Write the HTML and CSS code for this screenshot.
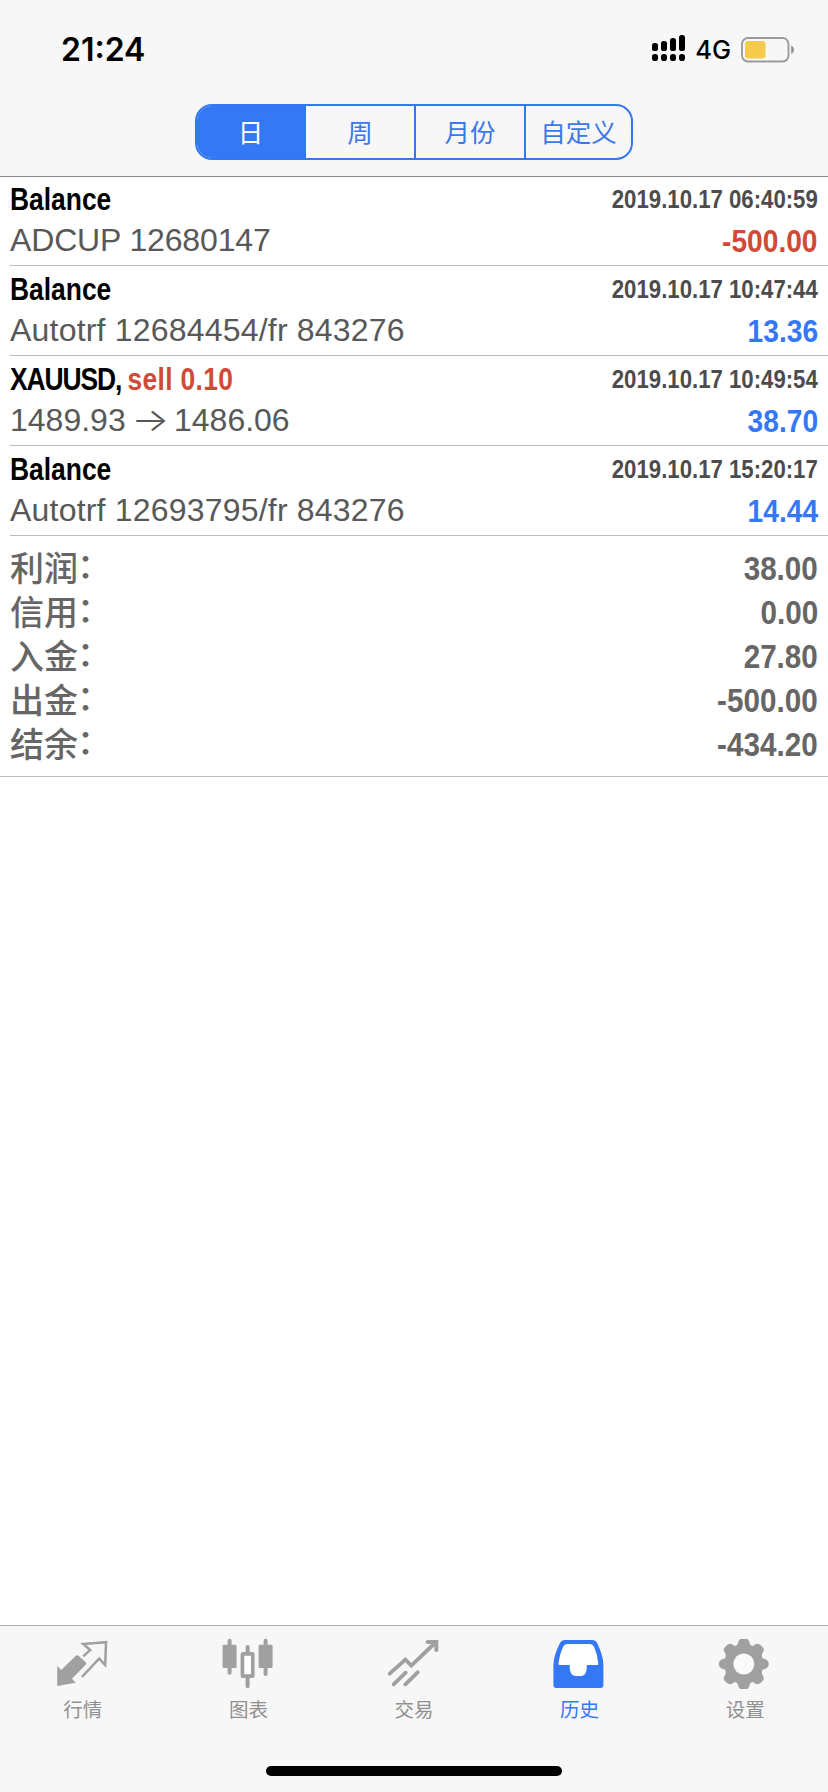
FILE: index.html
```html
<!DOCTYPE html>
<html lang="zh-CN">
<head>
<meta charset="utf-8">
<title>历史</title>
<link rel="stylesheet" href="styles.css">
</head>
<body>
<div class="screen">
  <header class="header">
    <div class="status">
      <span class="time">21:24</span>
      <div class="status-right">
        <svg class="signal" viewBox="0 0 34 27" width="34" height="27">
          <rect x="0" y="8" width="6" height="8" rx="2.6"/><rect x="9" y="6" width="6" height="10" rx="2.6"/><rect x="18" y="3" width="6" height="13" rx="2.6"/><rect x="27" y="0" width="6" height="16" rx="2.6"/>
          <rect x="0" y="19" width="6" height="7" rx="2.8"/><rect x="9" y="19" width="6" height="7" rx="2.8"/><rect x="18" y="19" width="6" height="7" rx="2.8"/><rect x="27" y="19" width="6" height="7" rx="2.8"/>
        </svg>
        <span class="network">4G</span>
        <svg class="battery" viewBox="0 0 54 26" width="54" height="26">
          <rect x="1" y="1" width="46.5" height="23.5" rx="6" fill="none" stroke="#9b9b9b" stroke-width="1.9"/>
          <rect x="4" y="4" width="20.5" height="17.5" rx="3" fill="#f5cb4c"/>
          <path d="M50.2 8.5c3.6 1.6 3.6 7 0 8.6z" fill="#8e8e8e"/>
        </svg>
      </div>
    </div>
    <nav class="segments">
      <span class="segment active">日</span>
      <span class="segment">周</span>
      <span class="segment">月份</span>
      <span class="segment">自定义</span>
    </nav>
  </header>

  <main class="content">
    <section class="deals">
      <article class="deal">
        <div class="line"><span class="title">Balance</span><span class="date">2019.10.17 06:40:59</span></div>
        <div class="line second"><span class="note adcup">ADCUP 12680147</span><span class="amount loss">-500.00</span></div>
      </article>
      <article class="deal">
        <div class="line"><span class="title">Balance</span><span class="date">2019.10.17 10:47:44</span></div>
        <div class="line second"><span class="note">Autotrf 12684454/fr 843276</span><span class="amount">13.36</span></div>
      </article>
      <article class="deal">
        <div class="line"><span class="title"><span class="symbol">XAUUSD, </span><span class="loss side">sell 0.10</span></span><span class="date">2019.10.17 10:49:54</span></div>
        <div class="line second"><span class="note price">1489.93 <span class="arrow">→</span> 1486.06</span><span class="amount">38.70</span></div>
      </article>
      <article class="deal">
        <div class="line"><span class="title">Balance</span><span class="date">2019.10.17 15:20:17</span></div>
        <div class="line second"><span class="note">Autotrf 12693795/fr 843276</span><span class="amount">14.44</span></div>
      </article>
    </section>
    <section class="summary">
      <div class="total"><span class="label">利润<span class="colon">：</span></span><span class="value">38.00</span></div>
      <div class="total"><span class="label">信用<span class="colon">：</span></span><span class="value">0.00</span></div>
      <div class="total"><span class="label">入金<span class="colon">：</span></span><span class="value">27.80</span></div>
      <div class="total"><span class="label">出金<span class="colon">：</span></span><span class="value">-500.00</span></div>
      <div class="total"><span class="label">结余<span class="colon">：</span></span><span class="value">-434.20</span></div>
    </section>
  </main>

  <footer class="footer">
    <nav class="tabs">
      <div class="tab">
        <svg class="icon" viewBox="158.4 78 180 168">
          <path d="M171 168L183 180L227 137Q231 134 235 137L257 157Q260 161 256 165L215 206L227 218L171 228Z" fill="currentColor"/>
          <path d="M249 139L270 120L249 102L317.500 96.500L315 165L297 146L245 201" fill="none" stroke="currentColor" stroke-width="7.5"/>
        </svg>
        <span>行情</span>
      </div>
      <div class="tab">
        <svg class="icon" viewBox="655.2 78 180 168">
          <g fill="currentColor"><rect x="669" y="104" width="42" height="70" rx="4"/><rect x="684" y="86" width="12" height="108" rx="6"/><rect x="777" y="104" width="42" height="70" rx="4"/><rect x="792" y="86" width="12" height="112" rx="6"/><rect x="738" y="105" width="12" height="27" rx="6"/><rect x="738" y="198" width="12" height="37" rx="6"/></g>
          <rect x="728.5" y="131.500" width="31" height="67" rx="1" fill="#fff" stroke="currentColor" stroke-width="11"/>
        </svg>
        <span>图表</span>
      </div>
      <div class="tab">
        <svg class="icon" viewBox="102 78 180 168">
          <path d="M119 191L166 149L184 167L258 96M131 223L167 188M166 223L203 187" fill="none" stroke="currentColor" stroke-width="11.5" stroke-linecap="round"/>
          <path d="M231 90H265V122Q259 130 253 122V102H231Q223 96 231 90Z" fill="currentColor"/>
        </svg>
        <span>交易</span>
      </div>
      <div class="tab selected">
        <svg class="icon" viewBox="598.8 78 180 168">
          <path d="M642 90H727Q736 90 740 98Q759 138 759 164V225Q759 234 750 234H618Q609 234 609 225V164Q609 138 629 98Q633 90 642 90Z" fill="currentColor"/>
          <path d="M650 102H719Q727 102 731 110Q742 136 744 161Q744 165 740 165H709V172Q709 198 690 198H678Q658 198 658 172V165H628Q624 165 624 161Q626 136 638 110Q642 102 650 102Z" fill="#fff"/>
        </svg>
        <span>历史</span>
      </div>
      <div class="tab">
        <svg class="icon" viewBox="225.6 78 180 168">
          <path fill="currentColor" d="M302 87H322Q328 89 329 99Q332 108 340 108Q346 101 353 101Q360 101 371 114Q374 122 367 131Q365 137 368 145Q376 147 382 151Q387 156 387 162Q387 168 382 173Q376 177 368 179Q365 187 367 193Q374 202 371 210Q360 223 353 223Q346 223 340 216Q332 216 329 225Q328 235 322 237H302Q296 235 295 225Q292 216 284 216Q278 223 271 223Q264 223 253 210Q250 202 257 193Q259 187 256 179Q248 177 242 173Q237 168 237 162Q237 156 242 151Q248 147 256 145Q259 137 257 131Q250 122 253 114Q264 101 271 101Q278 101 284 108Q292 108 295 99Q296 89 302 87Z"/>
          <circle cx="312" cy="162" r="31.500" fill="#fafafa"/>
        </svg>
        <span>设置</span>
      </div>
    </nav>
    <div class="home"></div>
  </footer>
</div>
</body>
</html>
```
FILE: styles.css
```css
* { box-sizing: border-box; }
body {
  margin: 0;
  background: #fff;
  color: #000;
  font-family: "Liberation Sans", "Noto Sans CJK SC", sans-serif;
}
.screen { width: 828px; height: 1792px; display: flex; flex-direction: column; overflow: hidden; }

.header { height: 177px; flex: none; background: #f7f7f7; border-bottom: 1px solid #8a8a8a; }
.status {
  height: 104px;
  padding: 0 33px 5px 61px;
  display: flex;
  justify-content: space-between;
  align-items: center;
  font-family: Inter, sans-serif;
}
.time { font-size: 32px; font-weight: 600; letter-spacing: 0; }
.status-right { display: flex; align-items: center; }
.signal { margin-top: -2px; }
.network { margin-left: 9px; margin-right: 10px; font-size: 25.5px; font-weight: 500; line-height: 32px; }
.segments {
  width: 438px;
  height: 56px;
  margin-left: 195px;
  display: grid;
  grid-template-columns: 107px 110px 110px 107px;
  border: 2px solid #3478f0;
  border-radius: 17px;
  overflow: hidden;
}
.segment {
  display: flex;
  align-items: center;
  justify-content: center;
  color: #3d78e8;
  font: 25.500px/48px "Noto Sans CJK SC", sans-serif;
  padding-bottom: 3px;
  border-left: 2px solid #3478f0;
}
.segment.active { background: #3478f6; color: #fff; border-left: 0; }

.content { flex: 1; }
.deals { padding-left: 10px; }
.deal { height: 90px; padding: 3px 10px 0 0; border-bottom: 1px solid #bcbcbc; }
.deal:first-child { height: 89px; padding-top: 2px; }
.line { display: flex; justify-content: space-between; align-items: center; height: 40px; line-height: 40px; white-space: nowrap; }
.second { height: 42px; }
.title { font-size: 32px; font-weight: 700; transform: scaleX(.825); transform-origin: left; }
.symbol { letter-spacing: -1.3px; }
.side { letter-spacing: .4px; }
.date { font-size: 25.500px; font-weight: 700; color: #4c4c4c; transform: scaleX(.87); transform-origin: right; }
.note { font-size: 32px; color: #585858; letter-spacing: .2px; }
.adcup { letter-spacing: -.15px; }
.price { letter-spacing: 0; }
.arrow { display: inline-block; font-family: Inter, sans-serif; font-weight: 300; transform: scaleX(1.25); }
.amount { font-size: 32px; font-weight: 700; color: #3478f6; transform: translateY(1px) scaleX(.88); transform-origin: right; }
.loss { color: #d14a38; }

.summary { padding: 10px 10px 0; height: 241px; border-bottom: 1px solid #bcbcbc; }
.total { display: flex; align-items: center; justify-content: space-between; height: 44px; color: #666; }
.label { display: flex; height: 44px; font: 500 34px/42px "Noto Sans CJK SC", sans-serif; }
.colon { line-height: 36px; margin-left: -1px; }
.value { font-size: 33.500px; font-weight: 700; transform: translateY(1px) scaleX(.885); transform-origin: right; }

.footer { height: 167px; flex: none; background: #f7f7f7; border-top: 1px solid #b0b0b0; }
.tabs { display: grid; grid-template-columns: repeat(5, 1fr); height: 140px; padding-top: 10px; }
.tab { display: flex; flex-direction: column; align-items: center; color: #a0a0a0; }
.tab span { font: 19.500px/26px "Noto Sans CJK SC", sans-serif; margin-top: 4px; color: #909090; }
.icon { width: 60px; height: 56px; }
.tab.selected, .tab.selected span { color: #3478f6; }
.home { width: 296px; height: 10px; border-radius: 5px; background: #000; margin: 0 auto; }
```
